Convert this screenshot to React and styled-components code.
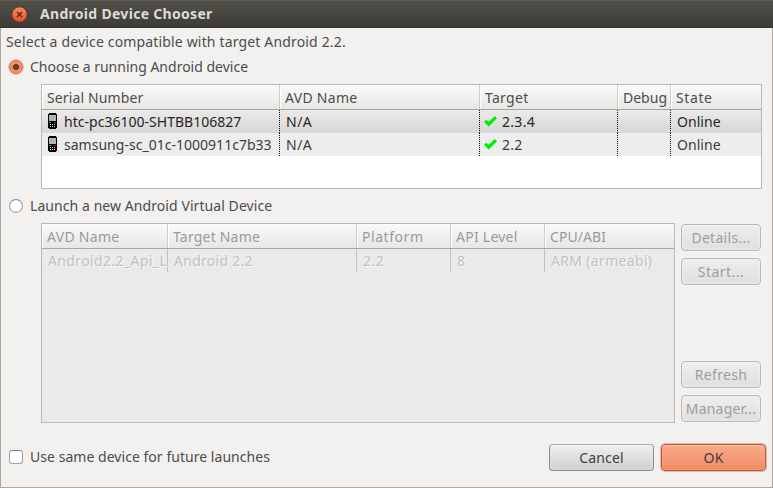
import React from "react";
import styled, { createGlobalStyle, css } from "styled-components";

const GlobalStyle = createGlobalStyle`
  * { box-sizing: border-box; }
  body {
    margin: 0;
    background: #3c3b37;
    font: 14px/20px "Noto Sans", "Open Sans", sans-serif;
    color: #4c4c4c;
  }
`;

const Window = styled.div`
  width: 773px;
  height: 488px;
  display: flex;
  flex-direction: column;
  overflow: hidden;
`;

const TitleBar = styled.header`
  flex: none;
  height: 28px;
  display: flex;
  align-items: center;
  gap: 12px;
  padding-left: 11px;
  background: linear-gradient(#504f49, #3d3c37);
  border-top: 1px solid #5d5b54;
  border-bottom: 1px solid #35342f;
`;

const Title = styled.h1`
  margin: 0;
  font-size: 14px;
  line-height: 20px;
  letter-spacing: 0.3px;
  color: #dfdbd2;
`;

const Body = styled.main`
  flex: 1;
  border: solid #aba8a2;
  border-width: 0 1px 1px;
  background: #f2f1f0;
`;

const Label = styled.span`
  white-space: nowrap;
  letter-spacing: ${(p) => p.$track || 0}px;
`;

const Prompt = styled.p`
  margin: 0;
  padding-left: 5px;
  line-height: 28px;
`;

const Option = styled.label`
  height: 22px;
  display: flex;
  align-items: center;
  gap: 7px;
  padding-left: 8px;
`;

const Radio = styled.span`
  width: 14px;
  height: 14px;
  border-radius: 50%;
  border: 1px solid #9d9b98;
  border-top-color: #85827e;
  background: #fff;
  box-shadow: 0 1px 0 #fff;
  ${(p) =>
    p.$checked &&
    css`
      border-color: #c9623f;
      background: radial-gradient(circle, #6b3a28 0 2.6px, #f28a62 3.4px 4.6px, #f69b78 5.5px);
      box-shadow: 0 0 0 1px #f5c6b4;
    `}
`;

const Check = styled.span`
  width: 14px;
  height: 14px;
  border: 1px solid #a5a29e;
  border-top-color: #85827e;
  border-radius: 3px;
  background: #fff;
`;

const Table = styled.section`
  border: 1px solid #bbb8b5;
  background: ${(p) => (p.$disabled ? "#ebeae9" : "#fff")};
`;

const DeviceTable = styled(Table)`
  width: 721px;
  height: 105px;
  margin: 6px 0 6px 40px;
`;

const AvdTable = styled(Table)`
  width: 634px;
  height: 200px;
`;

const Row = styled.div`
  display: grid;
  grid-template-columns: ${(p) => p.$columns};
`;

const HeaderRow = styled(Row)`
  height: 25px;
  background: linear-gradient(#fafafa, #e8e7e5);
  border-bottom: 1px solid #a5a5a0;
  ${(p) => p.$disabled && "color: #9a9a9a; border-color: #a9a7a5;"}
`;

const HeaderCell = styled.div`
  display: flex;
  align-items: center;
  padding: 2px 0 0 5px;
  box-shadow: inset 1px 0 0 #fff;
  border-right: 1px solid #cfcdcb;
  &:last-child { border-right: 0; }
`;

const DataRow = styled(Row)`
  height: 23px;
  color: #3c3c3c;
  background: ${(p) => (p.$selected ? "linear-gradient(#ebeae9, #d9d7d5)" : p.$disabled ? "none" : "#ededed")};
  ${(p) => p.$disabled && "color: #c3c0be; text-shadow: 1px 1px 0 #f8f8f8;"}
  ${(p) => p.$selected && "color: #262626;"}
`;

const Cell = styled.div`
  min-width: 0;
  display: flex;
  align-items: center;
  padding-left: 6px;
  border-right: 1px solid #c3c1bf;
  &:last-child { border-right: 0; }
`;

const DeviceCell = styled(Cell)`
  border-right: 0;
  background: repeating-linear-gradient(#111 0 1px, transparent 1px 2px) right / 1px 100% no-repeat;
  &:last-child { background: none; }
`;

const PhoneSlot = styled.svg`
  flex: none;
  width: 9px;
  height: 16px;
  margin: 0 7px 1px 0;
`;

const TickSlot = styled.svg`
  flex: none;
  width: 13px;
  height: 11px;
  margin: 0 5px 0 -2px;
`;

const AvdArea = styled.div`
  display: flex;
  gap: 6px;
  margin: 6px 0 0 40px;
`;

const Actions = styled.div`
  display: flex;
  flex-direction: column;
  gap: 7px;
  padding-top: 1px;
`;

const Button = styled.button`
  width: ${(p) => p.$width}px;
  height: 27px;
  display: flex;
  align-items: center;
  justify-content: center;
  padding: 0;
  font: inherit;
  color: #3f3f3f;
  border: 1px solid #8f8d8b;
  border-top-color: #a8a6a4;
  border-radius: 4px;
  background: linear-gradient(#f0f0f0, #d0cfce);
  box-shadow: inset 0 1px 0 #f8f8f8, inset 0 0 3px #e6e6e6;
  &:disabled {
    color: #9d9d9d;
    border-color: #bbb9b7;
    background: linear-gradient(#efeeed, #e0dfde);
    box-shadow: 0 0 0 1px #f5f4f3, inset 0 0 3px #f4f4f4;
  }
`;

const PrimaryButton = styled(Button)`
  border-color: #ad5f43;
  background: linear-gradient(#fbab8c, #ee8b63);
  box-shadow: 0 0 0 1px #f0b39b, inset 0 1px 0 #fdc0a8, inset 0 0 3px #f7aa8b;
`;

const Spacer = styled.div`
  height: 62px;
`;

const Footer = styled.footer`
  display: flex;
  align-items: flex-start;
  margin-top: 21px;
  padding-right: 6px;
  gap: 7px;
`;

const FooterOption = styled(Option)`
  height: 26px;
  margin-right: auto;
`;

const CloseIcon = () => (
  <svg width="17" height="17" viewBox="0 0 17 17">
    <defs>
      <linearGradient id="close" x1="0" y1="0" x2="0" y2="1">
        <stop offset="0" stopColor="#f58b66" />
        <stop offset="1" stopColor="#e2511f" />
      </linearGradient>
    </defs>
    <circle cx="8.5" cy="8.5" r="7.7" fill="url(#close)" stroke="#4a2e24" strokeWidth="0.8" />
    <path d="M6 6l5 5M11 6l-5 5" stroke="#45291f" strokeWidth="1.3" />
  </svg>
);

const Phone = () => (
  <PhoneSlot viewBox="0 0 9 16" shapeRendering="crispEdges">
    <path d="M1 0h7v1h1v14h-1v1h-7v-1h-1v-14h1z" fill="#000" />
    <path d="M1 2h7v6h-7z" fill="#aab4ba" />
    <path d="M1 9h2v1h-2z" fill="#00e000" />
    <path d="M6 9h2v1h-2z" fill="#f00000" />
    <path d="M2 11h1v1h-1zM4 11h1v1h-1zM6 11h1v1h-1zM2 13h1v1h-1zM4 13h1v1h-1zM6 13h1v1h-1z" fill="#ddd" />
  </PhoneSlot>
);

const Tick = () => (
  <TickSlot viewBox="0 0 13 11">
    <path d="M0 6l2.200-2.200 2.500 2L10.800 0l2.200 2.200L4.700 10.500z" fill="#00ee00" />
  </TickSlot>
);

const deviceColumns = "238px 200px 138px 53px 1fr";
const avdColumns = "126px 189px 94px 94px 1fr";

const deviceHeaders = [["Serial Number", 0.12], ["AVD Name", 0.3], ["Target", 0.3], ["Debug", 0], ["State", 0.6]];
const devices = [
  { serial: "htc-pc36100-SHTBB106827", target: "2.3.4", selected: true },
  { serial: "samsung-sc_01c-1000911c7b33", target: "2.2" },
];
const avdHeaders = [["AVD Name", 0.3], ["Target Name", 0.2], ["Platform", 0.55], ["API Level", 0.25], ["CPU/ABI", 0.06]];
const avd = [["Android2.2_Api_L", 0.38], ["Android 2.2", 0.28], ["2.2", 0.5], ["8", 0], ["ARM (armeabi)", 0.33]];

const Headers = ({ items, columns, disabled }) => (
  <HeaderRow $columns={columns} $disabled={disabled}>
    {items.map(([text, track]) => (
      <HeaderCell key={text}><Label $track={track}>{text}</Label></HeaderCell>
    ))}
  </HeaderRow>
);

export default function App() {
  return (
    <Window>
      <GlobalStyle />
      <TitleBar>
        <CloseIcon />
        <Title>Android Device Chooser</Title>
      </TitleBar>
      <Body>
        <Prompt><Label $track={0.16}>Select a device compatible with target Android 2.2.</Label></Prompt>
        <Option><Radio $checked /><Label>Choose a running Android device</Label></Option>
        <DeviceTable>
          <Headers items={deviceHeaders} columns={deviceColumns} />
          {devices.map((d) => (
            <DataRow key={d.serial} $columns={deviceColumns} $selected={d.selected}>
              <DeviceCell><Phone /><Label $track={0.02}>{d.serial}</Label></DeviceCell>
              <DeviceCell><Label $track={0.5}>N/A</Label></DeviceCell>
              <DeviceCell><Tick /><Label $track={0.3}>{d.target}</Label></DeviceCell>
              <DeviceCell />
              <DeviceCell><Label $track={0.05}>Online</Label></DeviceCell>
            </DataRow>
          ))}
        </DeviceTable>
        <Option><Radio /><Label $track={0.07}>Launch a new Android Virtual Device</Label></Option>
        <AvdArea>
          <AvdTable $disabled>
            <Headers items={avdHeaders} columns={avdColumns} disabled />
            <DataRow $columns={avdColumns} $disabled>
              {avd.map(([text, track]) => (
                <Cell key={text}><Label $track={track}>{text}</Label></Cell>
              ))}
            </DataRow>
          </AvdTable>
          <Actions>
            <Button $width={80} disabled><Label $track={0.3}>Details...</Label></Button>
            <Button $width={80} disabled><Label $track={0.45}>Start...</Label></Button>
            <Spacer />
            <Button $width={80} disabled><Label $track={0.35}>Refresh</Label></Button>
            <Button $width={80} disabled><Label $track={0.2}>Manager...</Label></Button>
          </Actions>
        </AvdArea>
        <Footer>
          <FooterOption><Check /><Label $track={0.04}>Use same device for future launches</Label></FooterOption>
          <Button $width={105}><Label $track={0.15}>Cancel</Label></Button>
          <PrimaryButton $width={105}><Label $track={0.2}>OK</Label></PrimaryButton>
        </Footer>
      </Body>
    </Window>
  );
}
